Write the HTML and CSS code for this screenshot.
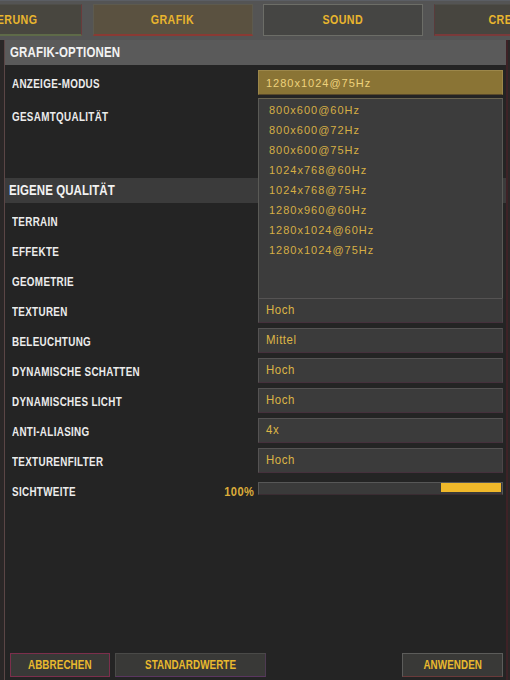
FILE: index.html
```html
<!DOCTYPE html>
<html lang="de">
<head>
<meta charset="utf-8">
<title>Grafik-Optionen</title>
<link rel="stylesheet" href="styles.css">
</head>
<body>
<div class="tabstrip">
  <div class="tabs">
    <div class="tab tab-steuerung"><span class="nc">STEUERUNG</span></div>
    <div class="tab tab-active"><span class="nc">GRAFIK</span></div>
    <div class="tab tab-sound"><span class="nc">SOUND</span></div>
    <div class="tab tab-credits"><span class="nc">CREDITS</span></div>
  </div>
</div>
<div class="panel">
  <div class="header"><span class="nl">GRAFIK-OPTIONEN</span></div>

  <div class="row row-first">
    <div class="label"><span class="nl">ANZEIGE-MODUS</span></div>
    <div class="field field-selected dropdown-anchor">
      <span class="mono">1280x1024@75Hz</span>
      <div class="dropdown">
        <div class="item">800x600@60Hz</div>
        <div class="item">800x600@72Hz</div>
        <div class="item">800x600@75Hz</div>
        <div class="item">1024x768@60Hz</div>
        <div class="item">1024x768@75Hz</div>
        <div class="item">1280x960@60Hz</div>
        <div class="item">1280x1024@60Hz</div>
        <div class="item">1280x1024@75Hz</div>
      </div>
    </div>
  </div>
  <div class="row row-gesamt">
    <div class="label"><span class="nl">GESAMTQUALITÄT</span></div>
    <div class="field"></div>
  </div>

  <div class="section"><span class="nl">EIGENE QUALITÄT</span></div>

  <div class="row"><div class="label"><span class="nl">TERRAIN</span></div><div class="field"></div></div>
  <div class="row"><div class="label"><span class="nl">EFFEKTE</span></div><div class="field"></div></div>
  <div class="row"><div class="label"><span class="nl">GEOMETRIE</span></div><div class="field"></div></div>
  <div class="row"><div class="label"><span class="nl">TEXTUREN</span></div><div class="field"><span class="nv">Hoch</span></div></div>
  <div class="row"><div class="label"><span class="nl">BELEUCHTUNG</span></div><div class="field"><span class="nv">Mittel</span></div></div>
  <div class="row"><div class="label"><span class="nl">DYNAMISCHE SCHATTEN</span></div><div class="field"><span class="nv">Hoch</span></div></div>
  <div class="row"><div class="label"><span class="nl">DYNAMISCHES LICHT</span></div><div class="field"><span class="nv">Hoch</span></div></div>
  <div class="row"><div class="label"><span class="nl">ANTI-ALIASING</span></div><div class="field"><span class="nv">4x</span></div></div>
  <div class="row"><div class="label"><span class="nl">TEXTURENFILTER</span></div><div class="field"><span class="nv">Hoch</span></div></div>
  <div class="row row-slider">
    <div class="label label-split"><span class="nl">SICHTWEITE</span><span class="pct">100%</span></div>
    <div class="slider"><div class="thumb"></div></div>
  </div>

  <div class="footer">
    <div class="btn btn-cancel"><span class="nc">ABBRECHEN</span></div>
    <div class="btn btn-default"><span class="nc">STANDARDWERTE</span></div>
    <div class="btn btn-apply"><span class="nc">ANWENDEN</span></div>
  </div>
</div>
</body>
</html>
```
FILE: styles.css
```css
* { box-sizing: border-box; }

html, body {
  margin: 0;
  height: 100%;
}

body {
  background: #2a2727;
  display: flex;
  flex-direction: column;
  overflow: hidden;
  font-family: "Liberation Sans", Arial, sans-serif;
}

/* narrow display text (condensed look) */
.nl, .nc, .nv, .pct {
  display: inline-block;
  white-space: nowrap;
}
.nl { transform: scaleX(0.82); transform-origin: left center; }
.nc { transform: scaleX(0.82); transform-origin: center center; }
.nv { transform: scaleX(0.88); transform-origin: left center; }

.tabstrip {
  height: 40px;
  flex: none;
  background: #545454;
  overflow: hidden;
  padding-top: 3px;
  border-top: 1px solid #5b5e64;
}

.tabs {
  display: flex;
  gap: 10.5px;
  margin-left: -78px;
}

.tab {
  flex: none;
  width: 160px;
  height: 32px;
  display: flex;
  align-items: center;
  justify-content: center;
  color: #e9b52e;
  font-weight: bold;
  font-size: 13px;
  letter-spacing: 0.5px;
  background: #48463f;
  border: 1px solid #4f4e49;
  padding-bottom: 1px;
}

.tab-steuerung {
  border-bottom: 2px solid #5e6a48;
  border-right-color: #6a3b3b;
}

.tab-active {
  background: #5a5140;
  border-color: #5d5a4e;
  border-bottom: 2px solid #8a3a34;
}

.tab-sound {
  background: #454543;
  border-color: #6c6d67;
}

.tab-credits {
  background: #47453f;
  border-left-color: #5a3b3b;
  border-bottom: 2px solid #7a3a3a;
}

.panel {
  flex: 1;
  margin: 0 2px 0 4px;
  background: #242424;
  border-left: 1px solid #5b4646;
  border-right: 2px solid #3e2226;
  display: flex;
  flex-direction: column;
  padding-bottom: 3px;
}

.header {
  height: 25px;
  flex: none;
  background: #5a5a5a;
  color: #f2f2f2;
  font-weight: bold;
  font-size: 14px;
  line-height: 25px;
  padding-left: 5px;
  letter-spacing: 0.2px;
}

.section {
  height: 25px;
  flex: none;
  margin-top: 50px;
  background: #3b3b3b;
  color: #f2f2f2;
  font-weight: bold;
  font-size: 14px;
  line-height: 25px;
  padding-left: 4px;
  letter-spacing: 0.1px;
}

.row {
  display: flex;
  align-items: center;
  height: 25px;
  flex: none;
  margin-top: 5px;
  padding-left: 7px;
  padding-right: 3px;
}

.row-gesamt { margin-top: 8px; }

.label {
  flex: 1;
  padding-top: 3px;
  color: #ececec;
  font-weight: bold;
  font-size: 12px;
  line-height: 14px;
  letter-spacing: 0.4px;
  white-space: nowrap;
}

.label-split {
  display: flex;
  justify-content: space-between;
  padding-right: 4px;
}

.pct {
  color: #dcac3a;
  font-size: 13px;
  letter-spacing: 0.5px;
  transform: scaleX(0.85);
  transform-origin: right center;
}

.field {
  flex: none;
  width: 245px;
  height: 25px;
  background: #3b3b3b;
  border: 1px solid #555353;
  border-bottom-color: #45303c;
  border-right-color: #4c4648;
  color: #dcb446;
  font-size: 13px;
  letter-spacing: 0.6px;
  line-height: 21px;
  padding-left: 7px;
}

.field-selected {
  background: #8a7435;
  border-color: #9c874a;
  border-bottom-color: #5a4a2a;
  line-height: 24px;
}

.mono {
  font-size: 11px;
  letter-spacing: 1px;
  color: #eed27c;
}

.dropdown-anchor { position: relative; }

.dropdown {
  position: absolute;
  left: -1px;
  right: -1px;
  top: calc(100% + 4px);
  height: 200px;
  padding-top: 1px;
  background: #3c3c3c;
  border: 1px solid #5a5a56;
  border-top-color: #6a6450;
  border-bottom: none;
  z-index: 2;
  line-height: 20px;
}

.item {
  height: 20px;
  line-height: 20px;
  padding-left: 10px;
  font-size: 11px;
  letter-spacing: 1px;
  color: #d6ae44;
}

.row-slider { align-items: flex-start; }

.row-slider .label { padding-top: 7px; }

.slider {
  flex: none;
  width: 245px;
  height: 13px;
  margin-top: 4px;
  background: #3a3a3a;
  border: 1px solid #575757;
  border-bottom-color: #3a2c32;
  display: flex;
  justify-content: flex-end;
  padding: 0 1px 2px 0;
}

.thumb {
  width: 60px;
  height: 9px;
  background: #f0b82a;
}

.footer {
  margin-top: auto;
  display: flex;
  gap: 5px;
  padding: 0 3px 0 5px;
}

.btn {
  height: 24px;
  display: flex;
  align-items: center;
  justify-content: center;
  background: #393937;
  color: #e9b92e;
  font-weight: bold;
  font-size: 12px;
  letter-spacing: 0.1px;
  border: 1px solid #4a4a48;
}

.btn-cancel {
  width: 100px;
  border-color: #7c2f4c;
}

.btn-default {
  width: 151px;
  border-bottom-color: #5a3660;
  border-right-color: #4e3a52;
}

.btn-apply {
  width: 101px;
  margin-left: auto;
  border-color: #5c5c5a;
  border-bottom-color: #6a3a3a;
}
```
